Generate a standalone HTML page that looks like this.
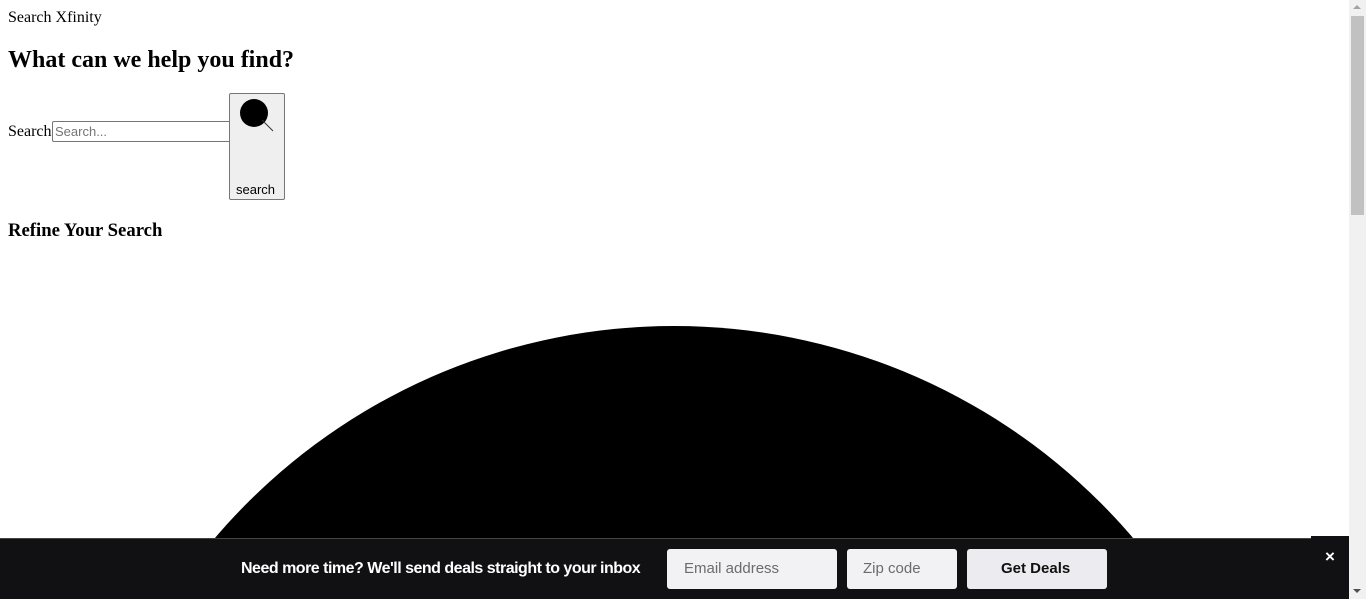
<!DOCTYPE html>
<html><head><style>
html,body{margin:0;padding:0;background:#fff;font-family:"Liberation Serif",serif;}
#w{position:relative;width:1366px;height:599px;overflow:hidden;}
.a{position:absolute;}
</style></head><body><div id="w">
<div class="a" style="left:8px;top:9px;font-size:16px;">Search Xfinity</div>
<div class="a" style="left:8px;top:47px;font-size:24px;font-weight:bold;">What can we help you find?</div>
<div class="a" style="left:8px;top:123px;font-size:16px;">Search</div>
<div class="a" style="left:52px;top:121px;width:175px;height:19px;border:1px solid #767676;border-radius:2px;font:13px 'Liberation Sans',sans-serif;color:#757575;line-height:19px;padding-left:2px;box-sizing:content-box;">Search...</div>
<div class="a" style="left:229px;top:93px;width:54px;height:105px;border:1px solid #767676;border-radius:2px;background:#efefef;"></div>
<div class="a" style="left:240px;top:99px;width:28px;height:28px;border-radius:50%;background:#000;"></div>
<svg class="a" style="left:260px;top:118px" width="16" height="16"><line x1="2" y1="2" x2="13" y2="13" stroke="#333" stroke-width="1"/></svg>
<div class="a" style="left:236px;top:182px;font:13px 'Liberation Sans',sans-serif;">search</div>
<div class="a" style="left:8px;top:220px;font-size:18.7px;font-weight:bold;">Refine Your Search</div>
<div class="a" style="left:71px;top:326px;width:1206px;height:1206px;border-radius:50%;background:#000;"></div>
<div class="a" style="left:0;top:538px;width:1349px;height:61px;background:#111113;border-top:1px solid #444;"></div>
<div class="a" style="left:1311px;top:536px;width:38px;height:3px;background:#111113;"></div>
<div class="a" style="left:241px;top:560px;font:bold 16px 'Liberation Sans',sans-serif;color:#fff;letter-spacing:-0.5px;">Need more time? We'll send deals straight to your inbox</div>
<div class="a" style="left:667px;top:549px;width:170px;height:40px;background:#f2f2f5;border-radius:3px;"></div>
<div class="a" style="left:684px;top:560px;font:15px 'Liberation Sans',sans-serif;color:#6b6b70;">Email address</div>
<div class="a" style="left:847px;top:549px;width:110px;height:40px;background:#f2f2f5;border-radius:3px;"></div>
<div class="a" style="left:863px;top:560px;font:15px 'Liberation Sans',sans-serif;color:#6b6b70;">Zip code</div>
<div class="a" style="left:967px;top:549px;width:140px;height:40px;background:#ececf0;border-radius:3px;"></div>
<div class="a" style="left:1001px;top:560px;font:bold 15px 'Liberation Sans',sans-serif;color:#111;">Get Deals</div>
<div class="a" style="left:1325px;top:547px;font:bold 17px 'Liberation Sans',sans-serif;color:#fff;">×</div>
<div class="a" style="left:1349px;top:0;width:17px;height:599px;background:#f1f1f1;"></div>
<div class="a" style="left:1351px;top:16px;width:13px;height:199px;background:#c1c1c1;"></div>
<div class="a" style="left:1353px;top:5px;width:0;height:0;border-left:4px solid transparent;border-right:4px solid transparent;border-bottom:4px solid #a3a3a3;"></div>
<div class="a" style="left:1353px;top:589px;width:0;height:0;border-left:4px solid transparent;border-right:4px solid transparent;border-top:4px solid #505050;"></div>
</div></body></html>
